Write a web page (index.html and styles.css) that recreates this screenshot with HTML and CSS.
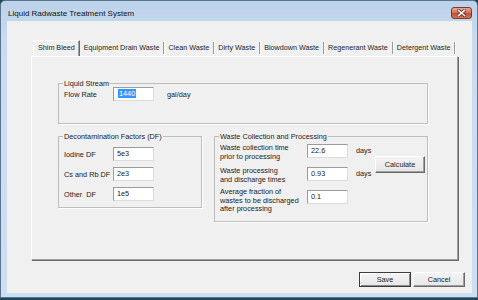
FILE: index.html
```html
<!DOCTYPE html>
<html lang="en">
<head>
    <title>Liquid Radwaste Treatment System</title>
    <link rel="stylesheet" href="styles.css">
</head>
<body>

<div class="window">
    <div class="titlebar">
        <span class="title">Liquid Radwaste Treatment System</span>
        <span class="close">
            <svg width="9" height="8" viewBox="0 0 9 8">
                <path d="M1.5 1.5 L7.5 6.5 M7.5 1.5 L1.5 6.5" stroke="#6b2418" stroke-width="3" stroke-linecap="square"/>
                <path d="M1.5 1.5 L7.5 6.5 M7.5 1.5 L1.5 6.5" stroke="#fff" stroke-width="1.6" stroke-linecap="square"/>
            </svg>
        </span>
    </div>

    <div class="client">
        <div class="tabs">
            <div class="tab active">Shim Bleed</div>
            <div class="tab">Equipment Drain Waste</div>
            <div class="tab">Clean Waste</div>
            <div class="tab">Dirty Waste</div>
            <div class="tab">Blowdown Waste</div>
            <div class="tab">Regenerant Waste</div>
            <div class="tab">Detergent Waste</div>
        </div>

        <div class="panel">
            <fieldset class="group liquid">
                <legend>Liquid Stream</legend>
                <div class="row">
                    <span class="lbl">Flow Rate</span>
                    <span class="field"><span class="sel">1440</span></span>
                    <span class="unit">gal/day</span>
                </div>
            </fieldset>

            <div class="lower">
                <fieldset class="group decon">
                    <legend>Decontamination Factors (DF)</legend>
                    <div class="row">
                        <span class="lbl">Iodine DF</span>
                        <span class="field">5e3</span>
                    </div>
                    <div class="row">
                        <span class="lbl">Cs and Rb DF</span>
                        <span class="field">2e3</span>
                    </div>
                    <div class="row">
                        <span class="lbl">Other&nbsp; DF</span>
                        <span class="field">1e5</span>
                    </div>
                </fieldset>

                <fieldset class="group waste">
                    <legend>Waste Collection and Processing</legend>
                    <div class="wgrid">
                        <span class="wlbl">Waste collection time<br>prior to processing</span>
                        <span class="field">22.6</span>
                        <span class="unit">days</span>
                        <button class="btn calc">Calculate</button>

                        <span class="wlbl">Waste processing<br>and discharge times</span>
                        <span class="field">0.93</span>
                        <span class="unit">days</span>

                        <span class="wlbl third">Average fraction of<br>wastes to be discharged<br>after processing</span>
                        <span class="field">0.1</span>
                    </div>
                </fieldset>
            </div>
        </div>

        <div class="actions">
            <button class="btn default">Save</button>
            <button class="btn">Cancel</button>
        </div>
    </div>
</div>

</body>
</html>
```

FILE: styles.css
```css
html, body {
    margin: 0;
    padding: 0;
}
body {
    width: 478px;
    height: 300px;
    overflow: hidden;
    background: #1d4858;
    font-family: "Liberation Sans", Arial, sans-serif;
    font-size: 7.3px;
    color: #000;
}
.window {
    box-sizing: border-box;
    width: 478px;
    height: 298px;
    border: 1px solid #5b7590;
    border-radius: 5px 5px 0 0;
    background: linear-gradient(to bottom, #bcd2ea, #c9dbee 40px, #cddff1);
    padding: 0 5px 4px 6px;
    display: flex;
    flex-direction: column;
}
.titlebar {
    height: 20px;
    padding-top: 4px;
    box-sizing: border-box;
    display: flex;
    align-items: center;
    justify-content: space-between;
}
.title {
    font-size: 8px;
    color: #111;
    margin-left: 1px;
}
.close {
    width: 21px;
    height: 12px;
    box-sizing: border-box;
    border: 1px solid #7d3a2c;
    border-radius: 3px;
    background: linear-gradient(to bottom, #e6a897, #d46f58 50%, #c24a30 51%, #d0775c);
    display: flex;
    align-items: center;
    justify-content: center;
}
.close svg {
    display: block;
}
.client {
    flex: 1;
    background: #f0f0f0;
    padding: 19px 0 0 24px;
    display: flex;
    flex-direction: column;
}

/* tab strip */
.tabs {
    display: flex;
    align-items: flex-end;
    height: 16px;
    margin-left: 2px;
}
.tab {
    height: 12px;
    line-height: 12px;
    padding: 0 4px;
    margin-bottom: 2px;
    font-size: 7.2px;
    color: #222;
    border-right: 1px solid #9a9a9a;
    box-shadow: 1px 0 0 #fff;
    white-space: nowrap;
}
.tab.active {
    height: 16px;
    line-height: 13px;
    margin-bottom: 0;
    border-left: 1px solid #fff;
    border-top: 1px solid #fff;
    border-right: 1px solid #696969;
    box-shadow: inset -1px 0 0 #a0a0a0;
    box-sizing: border-box;
}

/* tab page */
.panel {
    box-sizing: border-box;
    width: 427px;
    height: 204px;
    border-top: 1px solid #fff;
    border-left: 1px solid #fff;
    border-right: 1px solid #a0a0a0;
    border-bottom: 1px solid #a0a0a0;
    box-shadow: 1px 1px 0 #696969;
    padding: 22px 0 0 26px;
}
.group {
    margin: 0;
    min-width: 0;
    box-sizing: border-box;
    border: 1px solid #bdbdbd;
    box-shadow: 1px 1px 0 #fff;
    padding: 0 5px;
}
.group legend {
    padding: 0 1px;
    margin-left: -1px;
    line-height: 9px;
    color: #222;
}
.liquid {
    width: 370px;
    height: 45px;
}
.liquid .row {
    margin-top: -1px;
}
.row {
    display: flex;
    align-items: center;
    height: 14px;
    color: #222;
}
.lbl {
    width: 49px;
    white-space: nowrap;
}
.field {
    box-sizing: border-box;
    width: 41px;
    height: 14px;
    line-height: 12px;
    padding-left: 3px;
    background: #fff;
    color: #222;
    border: 1px solid;
    border-color: #9c9c9c #dcdcdc #dcdcdc #9c9c9c;
}
.sel {
    display: inline-block;
    background: #3399ff;
    color: #fff;
    line-height: 9px;
    padding: 0 1px;
    margin-left: 1px;
}
.unit {
    padding-left: 13px;
}

.lower {
    display: flex;
    align-items: flex-start;
    gap: 12px;
    margin-top: 8px;
}
.decon {
    width: 144px;
    height: 76px;
    padding-top: 6px;
}
.decon .row + .row {
    margin-top: 6px;
}
.waste {
    width: 214px;
    height: 90px;
    padding: 3px 0 0 5px;
}
.wgrid {
    display: grid;
    grid-template-columns: 87px 41px 27px 50px;
    align-items: start;
    row-gap: 6px;
    color: #222;
}
.wlbl {
    line-height: 8.5px;
    white-space: nowrap;
}
.wlbl.third {
    margin-top: -2px;
}
.waste .unit {
    padding-left: 8px;
    line-height: 14px;
}
.calc {
    grid-column: 4;
    grid-row: 1 / 3;
    align-self: center;
    width: 50px;
    height: 17px;
}

/* buttons */
.btn {
    box-sizing: border-box;
    font-family: "Liberation Sans", Arial, sans-serif;
    font-size: 7.3px;
    color: #222;
    padding: 0;
    background: linear-gradient(to bottom, #f4f4f4, #e6e6e6);
    border: 1px solid;
    border-color: #fff #696969 #696969 #fff;
    box-shadow: inset -1px -1px 0 #a0a0a0;
    border-radius: 0;
}
.btn.default {
    border: 1px solid #3c3c3c;
    box-shadow: inset 1px 1px 0 #fff, inset -1px -1px 0 #8a8a8a;
}
.actions {
    display: flex;
    justify-content: flex-end;
    gap: 2px;
    padding-right: 7px;
    margin-top: 12px;
}
.actions .btn {
    width: 52px;
    height: 15px;
}
```
